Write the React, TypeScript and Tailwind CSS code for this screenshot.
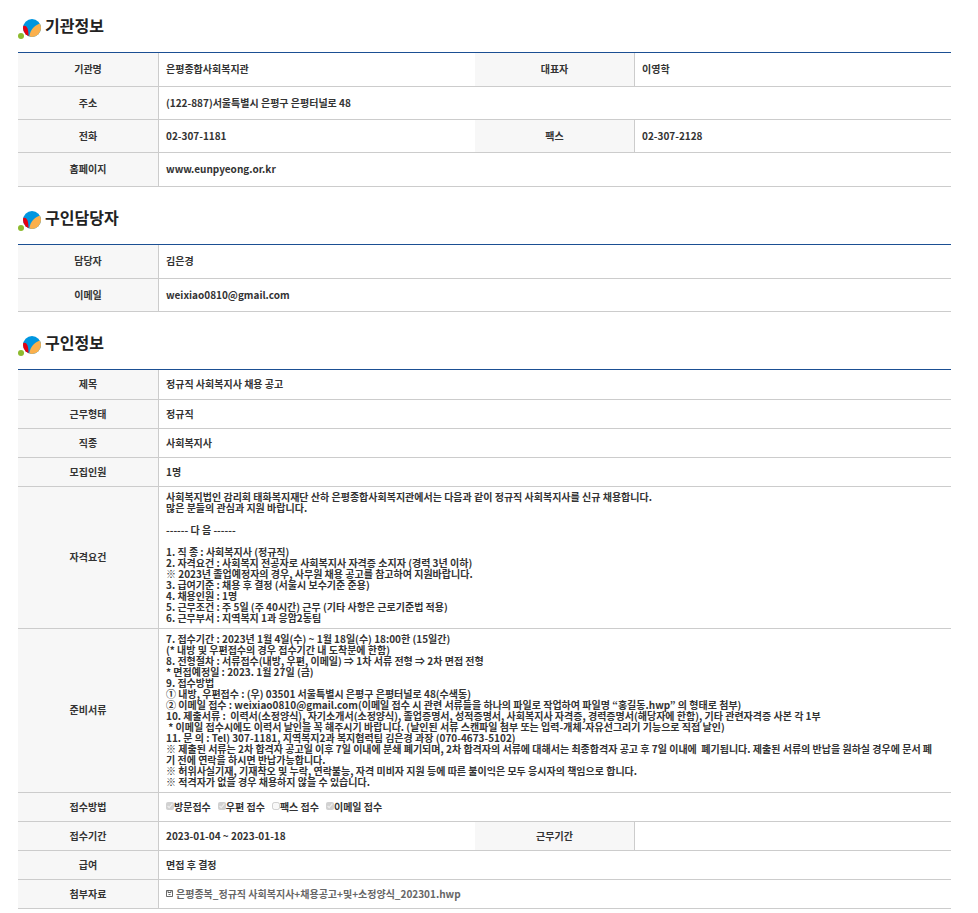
import React from "react";

const qualification = `사회복지법인 감리회 태화복지재단 산하 은평종합사회복지관에서는 다음과 같이 정규직 사회복지사를 신규 채용합니다.
많은 분들의 관심과 지원 바랍니다.

------ 다 음 ------

1. 직 종 : 사회복지사 (정규직)
2. 자격요건 : 사회복지 전공자로 사회복지사 자격증 소지자 (경력 3년 이하)
※ 2023년 졸업예정자의 경우, 사무원 채용 공고를 참고하여 지원바랍니다.
3. 급여기준 : 채용 후 결정 (서울시 보수기준 준용)
4. 채용인원 : 1명
5. 근무조건 : 주 5일 (주 40시간) 근무 (기타 사항은 근로기준법 적용)
6. 근무부서 : 지역복지 1과 응암2동팀`;

const documents = `7. 접수기간 : 2023년 1월 4일(수) ~ 1월 18일(수) 18:00한 (15일간)
(* 내방 및 우편접수의 경우 접수기간 내 도착분에 한함)
8. 전형절차 : 서류접수(내방, 우편, 이메일) ⇒ 1차 서류 전형 ⇒ 2차 면접 전형
* 면접예정일 : 2023. 1월 27일 (금)
9. 접수방법
① 내방, 우편접수 : (우) 03501 서울특별시 은평구 은평터널로 48(수색동)
② 이메일 접수 : weixiao0810@gmail.com(이메일 접수 시 관련 서류들을 하나의 파일로 작업하여 파일명 “홍길동.hwp” 의 형태로 첨부)
10. 제출서류 :  이력서(소정양식), 자기소개서(소정양식), 졸업증명서, 성적증명서, 사회복지사 자격증, 경력증명서(해당자에 한함), 기타 관련자격증 사본 각 1부
 * 이메일 접수시에도 이력서 날인을 꼭 해주시기 바랍니다. (날인된 서류 스캔파일 첨부 또는 입력-개체-자유선그리기 기능으로 직접 날인)
11. 문 의 : Tel) 307-1181, 지역복지2과 복지협력팀 김은경 과장 (070-4673-5102)
※ 제출된 서류는 2차 합격자 공고일 이후 7일 이내에 분쇄 폐기되며, 2차 합격자의 서류에 대해서는 최종합격자 공고 후 7일 이내에  폐기됩니다. 제출된 서류의 반납을 원하실 경우에 문서 폐
기 전에 연락을 하시면 반납가능합니다.
※ 허위사실기재, 기재착오 및 누락, 연락불능, 자격 미비자 지원 등에 따른 불이익은 모두 응시자의 책임으로 합니다.
※ 적격자가 없을 경우 채용하지 않을 수 있습니다.`;

const methods = [
  { id: "visit", label: "방문접수", checked: true },
  { id: "post", label: "우편 접수", checked: true },
  { id: "fax", label: "팩스 접수", checked: false },
  { id: "email", label: "이메일 접수", checked: true },
];

const Title = ({ children }: { children: React.ReactNode }) => (
  <h2 className="flex items-start gap-[3px] pb-3 text-[16px] leading-3 font-bold text-[#222]">
    <svg width="24" height="21" viewBox="0 0 24 21" aria-hidden="true">
      <defs>
        <clipPath id="ball">
          <circle cx="14" cy="9" r="9" />
        </clipPath>
      </defs>
      <g clipPath="url(#ball)">
        <rect width="24" height="21" fill="#0096e0" />
        <path d="M24 4C17 5.500 12.500 9.500 11 18.500L24 21Z" fill="#fbb04c" />
        <path d="M4 7.500C8 5.500 10.500 8 10.500 17.500L8 18L3 14Z" fill="#e60012" />
      </g>
      <circle cx="3" cy="17" r="3" fill="#8dba2f" />
    </svg>
    {children}
  </h2>
);

const Table = ({ label, children }: { label: string; children: React.ReactNode }) => (
  <table
    aria-label={label}
    className="w-full table-fixed border-separate border-spacing-0 border-t border-[#1b4f93]"
  >
    <colgroup>
      <col className="w-[141px]" />
      <col />
      <col className="w-[160px]" />
      <col />
    </colgroup>
    <tbody>{children}</tbody>
  </table>
);

const Th = ({ children }: { children: React.ReactNode }) => (
  <th scope="row" className="border-r border-b border-[#ccc] bg-[#f7f7f7] px-0 pt-0 pb-[2px] text-center font-bold">
    {children}
  </th>
);

const Td = ({ span, children }: { span?: number; children?: React.ReactNode }) => (
  <td colSpan={span} className="border-b border-[#ccc] px-[7px] pt-0 pb-[2px]">
    {children}
  </td>
);

const App = () => {
  return (
    <main className="flex flex-col gap-6 bg-white pt-[19px] pr-[27px] pl-[18px] font-['Noto_Sans_CJK_KR','Noto_Sans',sans-serif] text-[10px] leading-[11px] font-semibold text-[#333]">
      <section>
        <Title>기관정보</Title>
        <Table label="기관정보">
          <tr className="h-[34px]">
            <Th>기관명</Th>
            <Td>은평종합사회복지관</Td>
            <Th>대표자</Th>
            <Td>이영학</Td>
          </tr>
          <tr className="h-[33px]">
            <Th>주소</Th>
            <Td span={3}>(122-887)서울특별시 은평구 은평터널로 48</Td>
          </tr>
          <tr className="h-[33px]">
            <Th>전화</Th>
            <Td>02-307-1181</Td>
            <Th>팩스</Th>
            <Td>02-307-2128</Td>
          </tr>
          <tr className="h-[34px]">
            <Th>홈페이지</Th>
            <Td span={3}>www.eunpyeong.or.kr</Td>
          </tr>
        </Table>
      </section>

      <section>
        <Title>구인담당자</Title>
        <Table label="구인담당자">
          <tr className="h-[34px]">
            <Th>담당자</Th>
            <Td span={3}>김은경</Td>
          </tr>
          <tr className="h-[33px]">
            <Th>이메일</Th>
            <Td span={3}>weixiao0810@gmail.com</Td>
          </tr>
        </Table>
      </section>

      <section>
        <Title>구인정보</Title>
        <Table label="구인정보">
          <tr className="h-[30px]">
            <Th>제목</Th>
            <Td span={3}>정규직 사회복지사 채용 공고</Td>
          </tr>
          <tr className="h-[29px]">
            <Th>근무형태</Th>
            <Td span={3}>정규직</Td>
          </tr>
          <tr className="h-[29px]">
            <Th>직종</Th>
            <Td span={3}>사회복지사</Td>
          </tr>
          <tr className="h-[29px]">
            <Th>모집인원</Th>
            <Td span={3}>1명</Td>
          </tr>
          <tr className="h-[142px]">
            <Th>자격요건</Th>
            <Td span={3}>
              <p className="whitespace-pre-wrap">{qualification}</p>
            </Td>
          </tr>
          <tr className="h-[164px]">
            <Th>준비서류</Th>
            <Td span={3}>
              <p className="whitespace-pre-wrap">{documents}</p>
            </Td>
          </tr>
          <tr className="h-[29px]">
            <Th>접수방법</Th>
            <Td span={3}>
              <div className="flex gap-[7px]">
                {methods.map((m) => (
                  <label key={m.id} htmlFor={m.id} className="flex items-center">
                    <input
                      id={m.id}
                      type="checkbox"
                      defaultChecked={m.checked}
                      disabled
                      className="size-2"
                    />
                    {m.label}
                  </label>
                ))}
              </div>
            </Td>
          </tr>
          <tr className="h-[29px]">
            <Th>접수기간</Th>
            <Td>2023-01-04 ~ 2023-01-18</Td>
            <Th>근무기간</Th>
            <Td />
          </tr>
          <tr className="h-[29px]">
            <Th>급여</Th>
            <Td span={3}>면접 후 결정</Td>
          </tr>
          <tr className="h-[29px]">
            <Th>첨부자료</Th>
            <Td span={3}>
              <a href="#file" className="flex items-center gap-[3px] text-[#666]">
                <svg width="7" height="7" viewBox="0 0 7 7" fill="none" stroke="#444" strokeWidth="0.8" aria-hidden="true">
                  <path d="M.5.5H6.500V6.500H.5ZM2 .5V2.500H5V.5M2.500 4.500H4.500" />
                </svg>
                은평종복_정규직 사회복지사+채용공고+및+소정양식_202301.hwp
              </a>
            </Td>
          </tr>
        </Table>
      </section>
    </main>
  );
};

export default App;
